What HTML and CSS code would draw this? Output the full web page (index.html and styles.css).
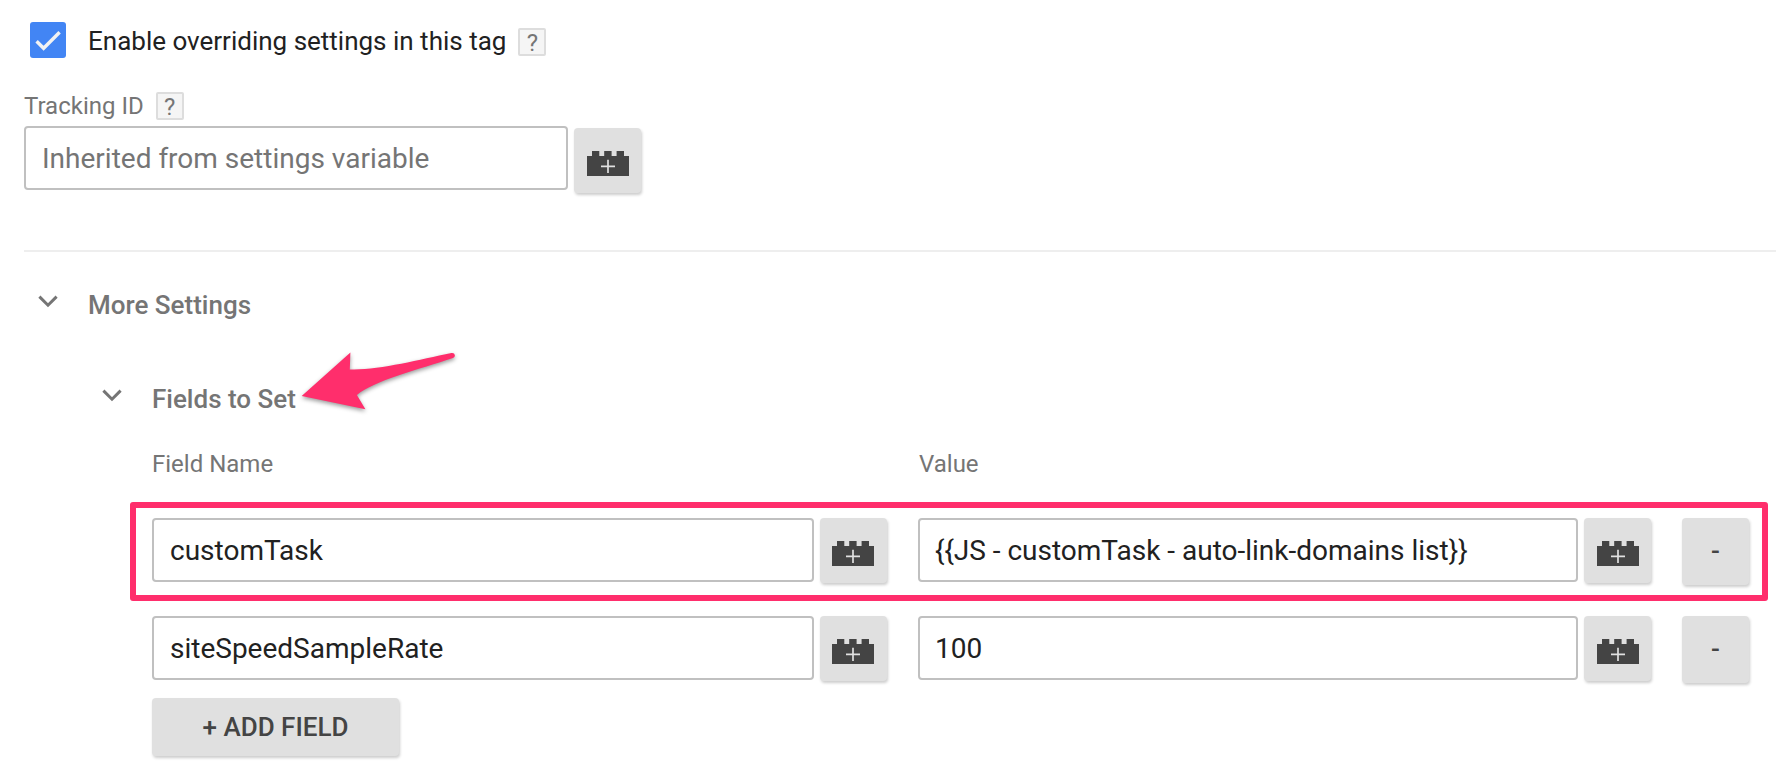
FILE: index.html
```html
<!DOCTYPE html>
<html lang="en">
<head>
<meta charset="utf-8">
<title>Tag settings</title>
<link rel="stylesheet" href="styles.css">
</head>
<body>
<svg class="defs" width="0" height="0" aria-hidden="true">
  <symbol id="brick" viewBox="0 0 42 25">
    <path fill="#444" d="M0 5H5V0H12.3V5H17.2V0H24.6V5H29.6V0H37V5H42V25H0Z"/>
    <path stroke="#e0e0e0" stroke-width="1.7" d="M14 15.4H28M21 8.7V22"/>
  </symbol>
  <symbol id="chevron" viewBox="0 0 20 13">
    <path fill="none" stroke="#757575" stroke-width="3" d="M1.4 1.6L10 10.2L18.6 1.6"/>
  </symbol>
</svg>
<main class="page">
  <div class="override">
    <span class="checkbox"><svg width="36" height="36" viewBox="0 0 36 36"><path fill="none" stroke="#f2f2f2" stroke-width="3.4" d="M6.6 19.3L13.6 26.3L29.6 10.3"/></svg></span>
    <span class="override-label">Enable overriding settings in this tag</span>
    <span class="help">?</span>
  </div>
  <div class="tracking-head"><span class="label">Tracking ID</span><span class="help">?</span></div>
  <div class="tracking-row">
    <div class="input placeholder">Inherited from settings variable</div>
    <div class="btn pick pick-tracking"><svg width="42" height="25"><use href="#brick"/></svg></div>
  </div>
  <div class="rule"></div>
  <div class="section"><svg class="chevron" width="20" height="13"><use href="#chevron"/></svg><span>More Settings</span></div>
  <div class="section nested"><svg class="chevron" width="20" height="13"><use href="#chevron"/></svg><span>Fields to Set</span></div>
  <div class="fields">
    <div class="grid heads"><span class="label">Field Name</span><span></span><span class="label value-label">Value</span></div>
    <div class="grid row">
      <div class="input">customTask</div>
      <div class="btn pick pick-name"><svg width="42" height="25"><use href="#brick"/></svg></div>
      <div class="input value">{{JS - customTask - auto-link-domains list}}</div>
      <div class="btn pick"><svg width="42" height="25"><use href="#brick"/></svg></div>
      <div class="btn minus">-</div>
      <div class="highlight"></div>
    </div>
    <div class="grid row">
      <div class="input">siteSpeedSampleRate</div>
      <div class="btn pick pick-name"><svg width="42" height="25"><use href="#brick"/></svg></div>
      <div class="input value">100</div>
      <div class="btn pick"><svg width="42" height="25"><use href="#brick"/></svg></div>
      <div class="btn minus">-</div>
    </div>
    <div class="btn add">+ ADD FIELD</div>
  </div>
  <svg class="arrow" width="170" height="74" viewBox="295 345 170 74"><path fill="#ff2e6c" d="M301.7 396L350.4 352.6L349.8 369.4C378 370.5 418 360 451.5 353.1Q454.4 352.7 454.9 355.2Q455 357.2 453 358C420 369 374 380.500 356.900 395L365.400 409.300Z"/></svg>
</main>
</body>
</html>
```
FILE: styles.css
```css
* { box-sizing: border-box; }
body {
  margin: 0;
  background: #fff;
  font-family: Roboto, "Liberation Sans", sans-serif;
  color: #212121;
}
.defs { display: block; height: 0; }
.page {
  position: relative;
  height: 778px;
  padding: 22px 0 0 24px;
  overflow: hidden;
}
.override { display: flex; height: 70px; padding-left: 6px; }
.checkbox { width: 36px; height: 36px; border-radius: 3px; background: #4285f4; }
.checkbox svg { display: block; }
.override-label { margin: 0 12px 0 22px; font-size: 26px; line-height: 38px; white-space: nowrap; }
.help {
  width: 28px;
  height: 28px;
  border: 2px solid #ddd;
  border-radius: 2px;
  background: #f5f5f5;
  color: #757575;
  font-size: 24px;
  line-height: 27px;
  text-align: center;
}
.override .help { margin-top: 6px; }
.label { color: #757575; font-size: 24px; line-height: 28px; }
.value-label { padding-left: 1px; }
.tracking-head { display: flex; gap: 12px; height: 34px; }
.tracking-row { display: flex; gap: 6px; height: 124px; }
.tracking-row .input { width: 544px; }
.input {
  height: 64px;
  padding-left: 16px;
  border: 2px solid #c0c0c0;
  border-radius: 4px;
  font-size: 28px;
  line-height: 62px;
  white-space: nowrap;
}
.placeholder { color: #757575; }
.btn {
  border-radius: 4px;
  background: #e0e0e0;
  box-shadow: 1px 2px 3px rgba(0, 0, 0, .2);
  color: #444;
  font-size: 26px;
  font-weight: 500;
  text-align: center;
}
.pick { width: 67px; height: 65px; padding: 23px 0 0 12.700px; }
.pick svg { display: block; }
.pick-name { padding-left: 11.700px; }
.pick-tracking { margin-top: 2px; padding-left: 13px; }
.minus { width: 67px; height: 67px; line-height: 67px; }
.rule { height: 2px; background: #eee; }
.section {
  display: flex;
  gap: 30px;
  height: 94px;
  padding: 37px 0 0 14px;
  color: #757575;
  font-size: 26px;
  font-weight: 500;
  line-height: 32px;
}
.nested { height: 104px; padding-left: 78px; }
.chevron { margin-top: 6px; }
.fields { padding-left: 128px; }
.grid {
  position: relative;
  display: grid;
  grid-template-columns: 662px 67px 660px 67px 67px;
  column-gap: 6px;
}
.grid > :nth-child(3) { margin-left: 25px; margin-right: -25px; }
.grid > :nth-child(4) { margin-left: 25px; }
.grid > :nth-child(5) { margin-left: 50px; }
.heads { height: 68px; }
.row { height: 98px; }
.value { padding-left: 15px; }
.highlight {
  position: absolute;
  left: -22px;
  top: -16px;
  width: 1638px;
  height: 99px;
  border: 6px solid #ff2e6c;
  border-radius: 3px;
}
.add { width: 247px; height: 58px; margin-top: -16px; line-height: 58px; }
.arrow { position: absolute; left: 295px; top: 345px; filter: drop-shadow(0 2px 2px rgba(0, 0, 0, .4)); }
```
